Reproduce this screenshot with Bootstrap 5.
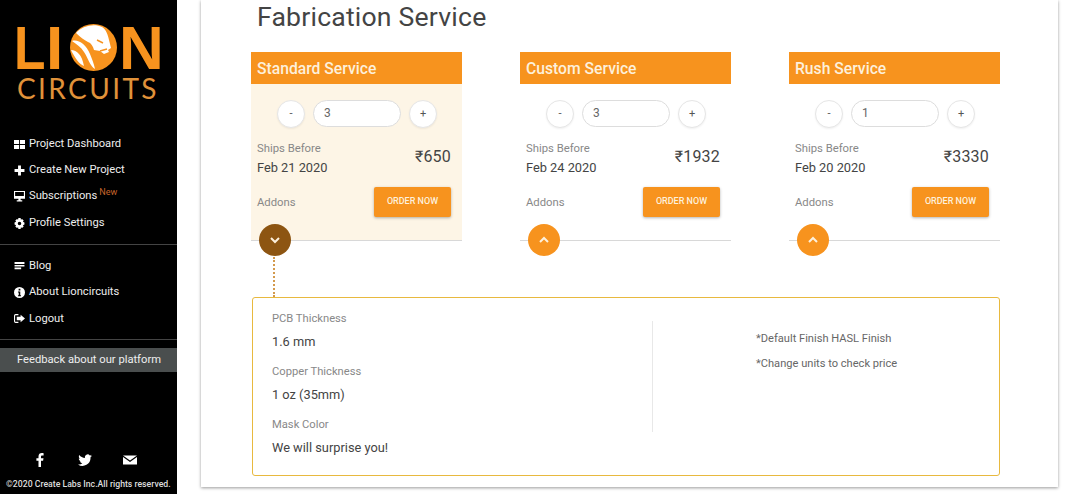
<!DOCTYPE html>
<html lang="en">
<head>
<meta charset="utf-8">
<title>Fabrication Service</title>
<link href="https://cdn.jsdelivr.net/npm/bootstrap@5.3.0/dist/css/bootstrap.min.css" rel="stylesheet">
<style>
html,body{height:494px;overflow:hidden}
body{font-family:Roboto,"Liberation Sans",sans-serif;background:#fff;color:#444;width:1080px}
.side{width:177px;height:494px;background:#000;color:#eee;flex:none}
.logo{height:122px;padding:25px 0 0 14px;flex:none}
.logo-top{height:45px;color:#f7931e;font:700 62px/45px "Liberation Sans",sans-serif}
.logo-l{display:block;width:32px;transform:scaleX(.83);transform-origin:left center}
.logo-i{display:block;width:17px}
.logo-mark{margin-left:7px;margin-top:-1px;flex:none}
.logo-n{margin-left:2px}
.logo-sub{color:#e0923a;font:400 28px/30px Lato,sans-serif;letter-spacing:2.4px;margin:3px 0 0 3px;white-space:nowrap}
.menu-group{padding:8px 0 7px 14px}
.menu-first{padding:9px 0 8px 14px}
.menu-item{height:26.3px;font-size:11.2px;color:#eee;gap:4px;white-space:nowrap}
.menu-item svg{width:11px;height:11px;fill:#fff;flex:none}
.new-tag{color:#c8642a;font-size:9px;position:relative;top:-4px;margin-left:-2px}
.rule{border-top:1px solid #444;flex:none}
.feedback{background:#4a4e4e;height:24px;margin-top:8px;font-size:11.2px;line-height:24px;padding-left:17px;color:#eee;white-space:nowrap}
.social{padding-left:33px;gap:31px;height:20px;margin-top:auto}
.social svg{width:14px;height:14px;fill:#fff}
.copy{font-size:8.7px;color:#ddd;padding:8px 0 3px 6px;line-height:13px;white-space:nowrap;font-weight:500}
.panel{width:857px;height:487px;margin-left:24px;background:#fff;box-shadow:0 1px 3px rgba(0,0,0,.4);padding-left:50px;flex:none}
.pg-title{font-size:26.6px;line-height:34px;font-weight:400;color:#444;margin:0;padding:0 0 0 6px;height:52px;letter-spacing:.2px}
.svc-row{gap:58px}
.svc{width:211px;height:189px;border-bottom:1px solid #d8d8d8;position:relative}
.svc-open{background:#fdf5e6}
.svc-head{background:#f7931e;color:#fdf0dc;height:32px;font-size:15.7px;font-weight:500;line-height:33px;padding-left:6px}
.qty{margin-top:16px;gap:8px;padding-left:26px}
.qty-btn{width:28px;height:28px;border-radius:50%;border:1px solid #e6e6e6;background:#fff;font-size:11px;color:#555;display:flex;align-items:center;justify-content:center;box-shadow:0 1px 2px rgba(0,0,0,.06)}
.qty-in{width:88px;height:27px;border-radius:14px;border:1px solid #ddd;background:#fff;font-size:12px;color:#666;line-height:25px;padding-left:10px}
.ships{padding:13px 11px 0 6px}
.lbl{font-size:11.3px;color:#888;line-height:16px}
.add-lbl{padding-top:8px}
.val{font-size:12.8px;color:#444;line-height:20px;margin-top:1px}
.price{font-size:16px;color:#444;margin-top:4px;letter-spacing:.2px}
.addons{padding:9px 11px 0 6px}
.order{background:#f7931e;color:#fdf0dc;font-size:9px;font-weight:500;width:77px;height:30px;line-height:28px;text-align:center;border-radius:2px;box-shadow:0 1px 3px rgba(0,0,0,.3)}
.toggle{width:32px;height:32px;border-radius:50%;background:#f7931e;position:absolute;left:8px;bottom:-16px;display:flex;align-items:center;justify-content:center}
.toggle svg{width:12px;height:8px;fill:none;stroke:#fdf0dc;stroke-width:2}
.toggle-open{background:#8d5512}
.dots{border-left:2px dotted #d39a4e;height:40px;margin:16px 0 0 22px}
.spec{width:748px;height:179px;margin-left:1px;border:1px solid #e8b93f;border-radius:3px}
.spec-left{width:399px;padding:13px 0 0 19px}
.spec-lbl{font-size:11.2px;color:#888;line-height:16px}
.spec-val{font-size:12.8px;color:#444;line-height:20px;margin:4.5px 0 12.5px}
.spec-right{border-left:1px solid #e8e8e8;height:111px;margin-top:23px;padding:10px 0 0 103px;font-size:11.1px;color:#666}
.spec-right p{margin:0 0 8.500px;line-height:16.5px}
</style>
</head>
<body class="d-flex">
<aside class="side d-flex flex-column">
  <div class="logo">
    <div class="logo-top d-flex align-items-center"><span class="logo-l">L</span><span class="logo-i">I</span>
      <svg class="logo-mark" width="47" height="47" viewBox="0 0 47 47" aria-hidden="true"><circle cx="23.500" cy="23.500" r="23.500" fill="#f7931e"/><path d="M6 9C12 2 24-1 32 3c4 2 6 8 7 13l2 8-3 2 1 2-5 2-4-3-6-1c-1-4-3-7-6-8-4-2-8-5-12-9z" fill="#fff"/><path d="M2 17c6-2 14 3 18 13 2 5 4 10 5 15-5-3-7-11-11-17C11 23 6 20 2 17zM1 26c6 0 11 5 13 16C9 40 5 34 1 26z" fill="#fff"/><path d="M27 16l6 3M30 27l7-2" stroke="#f7931e" stroke-width="1.500" fill="none"/></svg>
      <span class="logo-n">N</span></div>
    <div class="logo-sub">CIRCUITS</div>
  </div>
  <div class="menu-group menu-first">
    <div class="menu-item d-flex align-items-center"><svg viewBox="0 0 10 10"><path d="M0 1h4.600v3.600H0zM5.400 1H10v3.600H5.400zM0 5.400h4.600V9H0zM5.400 5.400H10V9H5.400z"/></svg>Project Dashboard</div>
    <div class="menu-item d-flex align-items-center"><svg viewBox="0 0 10 10"><path d="M3.700 .5h2.600v3.200h3.200v2.600H6.300v3.200H3.700V6.300H.5V3.700h3.200z"/></svg>Create New Project</div>
    <div class="menu-item d-flex align-items-center"><svg viewBox="0 0 10 10"><path fill-rule="evenodd" d="M0 0h10v7H6v1.500h1.500v1h-5v-1H4V7H0zM1 1v3.500h8V1z"/></svg>Subscriptions <span class="new-tag">New</span></div>
    <div class="menu-item d-flex align-items-center"><svg viewBox="0 0 10 10"><path fill-rule="evenodd" d="M4 0h2l.3 1.500 1-.5 1.500 1.300-.7 1.100 1.400.6v2l-1.400.5.7 1.200L7.300 9l-1-.6L6 10H4l-.3-1.600-1 .6-1.500-1.300.7-1.200L.5 6V4l1.400-.6-.7-1.100L2.700 1l1 .5zM5 3.400a1.600 1.600 0 100 3.200 1.600 1.600 0 000-3.200z"/></svg>Profile Settings</div>
  </div>
  <div class="rule"></div>
  <div class="menu-group">
    <div class="menu-item d-flex align-items-center"><svg viewBox="0 0 10 10"><path d="M.5 1h9v1.700h-9zM.5 3.600h9v1.500h-9zM.5 6h6v1.500h-6z"/></svg>Blog</div>
    <div class="menu-item d-flex align-items-center"><svg viewBox="0 0 10 10"><path fill-rule="evenodd" d="M5 0a5 5 0 110 10A5 5 0 015 0zM4.200 1.500v1.600h1.600V1.500zM3.600 4v1h.7v2.500h-.7v1h2.800v-1h-.7V4z"/></svg>About Lioncircuits</div>
    <div class="menu-item d-flex align-items-center"><svg viewBox="0 0 10 10"><path d="M0 2.500A1.500 1.500 0 011.500 1H4v1H1.500a.5.5 0 00-.5.5v5a.5.5 0 00.5.5H4v1H1.500A1.500 1.500 0 010 7.500z"/><path d="M6 1.500 10 5 6 8.500v-2H2.500v-3H6z"/></svg>Logout</div>
  </div>
  <div class="rule"></div>
  <div class="feedback">Feedback about our platform</div>
  <div class="social d-flex align-items-center">
    <svg viewBox="0 0 14 14"><path d="M8 14V7.700h2.100l.4-2.500H8V3.700c0-.7.3-1.200 1.300-1.200h1.300V.2C10.300.1 9.600 0 8.800 0 6.900 0 5.500 1.200 5.500 3.400v1.800H3.400v2.500h2.100V14z"/></svg>
    <svg viewBox="0 0 14 14"><path d="M14 2.800c-.5.2-1 .4-1.600.4.6-.3 1-.9 1.200-1.500-.5.3-1.100.5-1.800.7A2.800 2.800 0 007 5C4.700 4.900 2.600 3.800 1.200 2.100c-.7 1.300-.3 2.900.9 3.700-.5 0-.9-.1-1.300-.3 0 1.300.9 2.500 2.200 2.800-.4.1-.8.1-1.200 0 .3 1.100 1.400 1.900 2.600 1.900A5.700 5.700 0 010 11.400 8 8 0 0012.500 4.300c.6-.4 1.100-.9 1.500-1.500z"/></svg>
    <svg viewBox="0 0 14 14"><path d="M0 2.500h14L7 7.500zM0 4l7 5 7-5v7.500H0z"/></svg>
  </div>
  <div class="copy">©2020 Create Labs Inc.All rights reserved.</div>
</aside>
<main class="panel">
  <h1 class="pg-title">Fabrication Service</h1>
  <div class="svc-row d-flex">
    <section class="svc svc-open">
      <div class="svc-head">Standard Service</div>
      <div class="qty d-flex"><div class="qty-btn">-</div><div class="qty-in">3</div><div class="qty-btn">+</div></div>
      <div class="ships d-flex justify-content-between"><div><div class="lbl">Ships Before</div><div class="val">Feb 21 2020</div></div><div class="price">₹650</div></div>
      <div class="addons d-flex justify-content-between"><div class="lbl add-lbl">Addons</div><div class="order">ORDER NOW</div></div>
      <div class="toggle toggle-open"><svg viewBox="0 0 12 8"><path d="M2 2l4 4 4-4"/></svg></div>
    </section>
    <section class="svc">
      <div class="svc-head">Custom Service</div>
      <div class="qty d-flex"><div class="qty-btn">-</div><div class="qty-in">3</div><div class="qty-btn">+</div></div>
      <div class="ships d-flex justify-content-between"><div><div class="lbl">Ships Before</div><div class="val">Feb 24 2020</div></div><div class="price">₹1932</div></div>
      <div class="addons d-flex justify-content-between"><div class="lbl add-lbl">Addons</div><div class="order">ORDER NOW</div></div>
      <div class="toggle"><svg viewBox="0 0 12 8"><path d="M2 6l4-4 4 4"/></svg></div>
    </section>
    <section class="svc">
      <div class="svc-head">Rush Service</div>
      <div class="qty d-flex"><div class="qty-btn">-</div><div class="qty-in">1</div><div class="qty-btn">+</div></div>
      <div class="ships d-flex justify-content-between"><div><div class="lbl">Ships Before</div><div class="val">Feb 20 2020</div></div><div class="price">₹3330</div></div>
      <div class="addons d-flex justify-content-between"><div class="lbl add-lbl">Addons</div><div class="order">ORDER NOW</div></div>
      <div class="toggle"><svg viewBox="0 0 12 8"><path d="M2 6l4-4 4 4"/></svg></div>
    </section>
  </div>
  <div class="dots"></div>
  <section class="spec d-flex">
    <div class="spec-left">
      <div class="spec-lbl">PCB Thickness</div><div class="spec-val">1.6 mm</div>
      <div class="spec-lbl">Copper Thickness</div><div class="spec-val">1 oz (35mm)</div>
      <div class="spec-lbl">Mask Color</div><div class="spec-val">We will surprise you!</div>
    </div>
    <div class="spec-right flex-grow-1"><p>*Default Finish HASL Finish</p><p>*Change units to check price</p></div>
  </section>
</main>
<script src="https://cdn.jsdelivr.net/npm/bootstrap@5.3.0/dist/js/bootstrap.bundle.min.js"></script>
</body>
</html>
